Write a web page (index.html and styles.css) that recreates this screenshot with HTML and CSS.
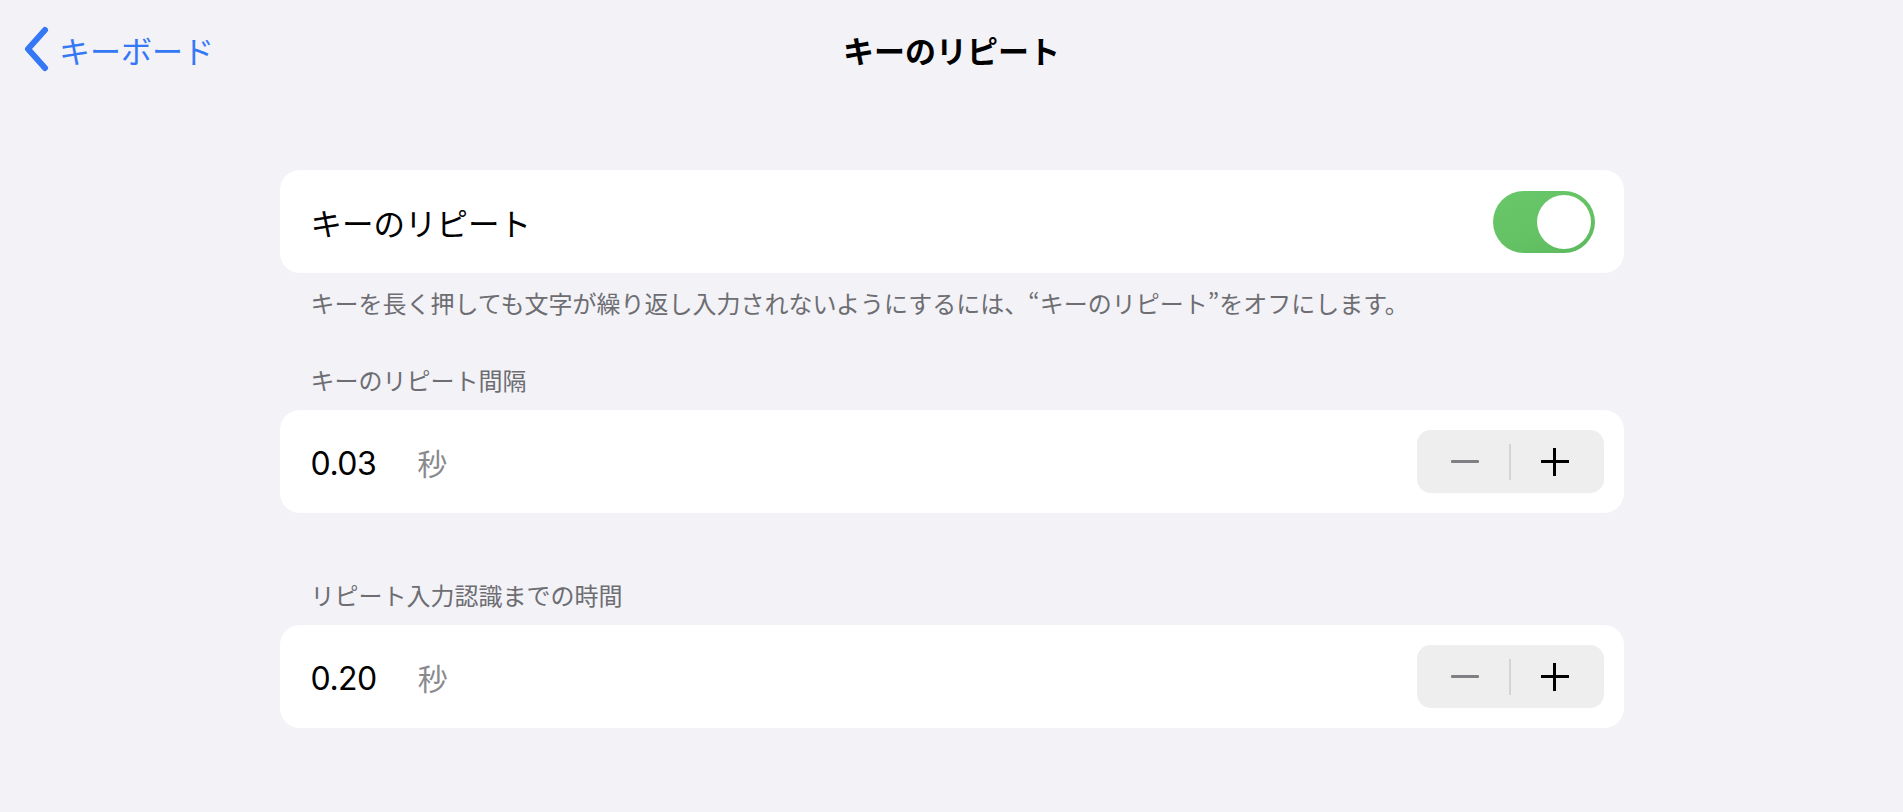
FILE: index.html
```html
<!DOCTYPE html>
<html lang="ja">
<head>
  <meta charset="UTF-8">
  <title>キーのリピート</title>
  <link rel="stylesheet" href="styles.css">
</head>
<body>
  <div class="navBar">
    <a class="backButton" href="#">
      <svg class="chevron" width="28" height="46" viewBox="0 0 28 46">
        <path d="M22 4 L5 23 L22 42" fill="none" stroke="#3478f6" stroke-width="6" stroke-linecap="round" stroke-linejoin="round"/>
      </svg>
      <span>キーボード</span>
    </a>
    <h1 class="navTitle">キーのリピート</h1>
    <div></div>
  </div>

  <div class="content">
    <div class="group first">
      <div class="cell">
        <span class="cellLabel">キーのリピート</span>
        <span class="switch on"><span class="knob"></span></span>
      </div>
      <p class="groupFooter">キーを長く押しても文字が繰り返し入力されないようにするには、“キーのリピート”をオフにします。</p>
    </div>

    <div class="group">
      <h2 class="groupHeader">キーのリピート間隔</h2>
      <div class="cell">
        <div class="valueBox">
          <span class="value">0.03</span>
          <span class="unit">秒</span>
        </div>
        <div class="stepper">
          <span class="stepMinus"></span>
          <span class="stepDivider"></span>
          <span class="stepPlus"></span>
        </div>
      </div>
    </div>

    <div class="group last">
      <h2 class="groupHeader">リピート入力認識までの時間</h2>
      <div class="cell">
        <div class="valueBox">
          <span class="value">0.20</span>
          <span class="unit">秒</span>
        </div>
        <div class="stepper">
          <span class="stepMinus"></span>
          <span class="stepDivider"></span>
          <span class="stepPlus"></span>
        </div>
      </div>
    </div>
  </div>
</body>
</html>
```

FILE: styles.css
```css
body {
  margin: 0;
  background-color: #f2f2f7;
  color: #000;
  font-family: "Noto Sans CJK JP", "Noto Sans", sans-serif;
}

/* navigation bar */
.navBar {
  height: 98px;
  display: grid;
  grid-template-columns: 1fr auto 1fr;
  align-items: center;
  padding: 0 23px;
}
.backButton {
  display: flex;
  align-items: center;
  gap: 8px;
  color: #3478f6;
  text-decoration: none;
  font-size: 31px;
  line-height: 1;
}
.chevron {
  display: block;
}
.navTitle {
  margin: 0;
  font-size: 31px;
  font-weight: bold;
  line-height: 1;
}

/* grouped list */
.content {
  width: 1344px;
  margin: 0 auto;
  padding-top: 72px;
}
.group {
  margin-bottom: 47px;
}
.group.last {
  margin-top: 67px;
}
.cell {
  height: 103px;
  box-sizing: border-box;
  background-color: #fff;
  border-radius: 20px;
  display: flex;
  align-items: center;
  justify-content: space-between;
  padding: 0 20px 0 31px;
}
.group.first .cell {
  padding-right: 29px;
}
.cellLabel {
  font-size: 31.5px;
}
.groupFooter {
  margin: 15px 0 0 0;
  padding-left: 31px;
  font-size: 24px;
  line-height: 30px;
  color: #6d6d72;
}
.groupHeader {
  margin: 0 0 15px 0;
  padding-left: 31px;
  font-size: 24px;
  font-weight: normal;
  line-height: 30px;
  color: #6d6d72;
}

/* switch */
.switch {
  width: 102px;
  height: 62px;
  border-radius: 31px;
  background-color: #e9e9ea;
  display: flex;
  align-items: center;
  padding: 4px;
  box-sizing: border-box;
}
.switch.on {
  background: linear-gradient(160deg, #68c769 0%, #64c265 60%, #5cb85d 100%);
  justify-content: flex-end;
}
.knob {
  width: 54px;
  height: 54px;
  border-radius: 50%;
  background-color: #fff;
}

/* value + stepper */
.valueBox {
  display: flex;
  align-items: baseline;
  gap: 41px;
}
.value {
  font-family: Inter, "Liberation Sans", sans-serif;
  font-size: 32px;
  letter-spacing: -0.5px;
}
.unit {
  font-size: 30px;
  color: #8a8a8e;
}
.stepper {
  width: 187px;
  height: 63px;
  border-radius: 14px;
  background-color: #eeeeef;
  display: flex;
  align-items: center;
  justify-content: space-around;
  padding: 0 20px;
  box-sizing: border-box;
}
.stepMinus {
  width: 28px;
  height: 3px;
  background-color: #7f7f84;
  border-radius: 1px;
}
.stepDivider {
  width: 2px;
  height: 36px;
  background-color: #d4d4d6;
}
.stepPlus {
  width: 28px;
  height: 28px;
  background:
    linear-gradient(#000, #000) center / 28px 3px no-repeat,
    linear-gradient(#000, #000) center / 3px 28px no-repeat;
}
```
